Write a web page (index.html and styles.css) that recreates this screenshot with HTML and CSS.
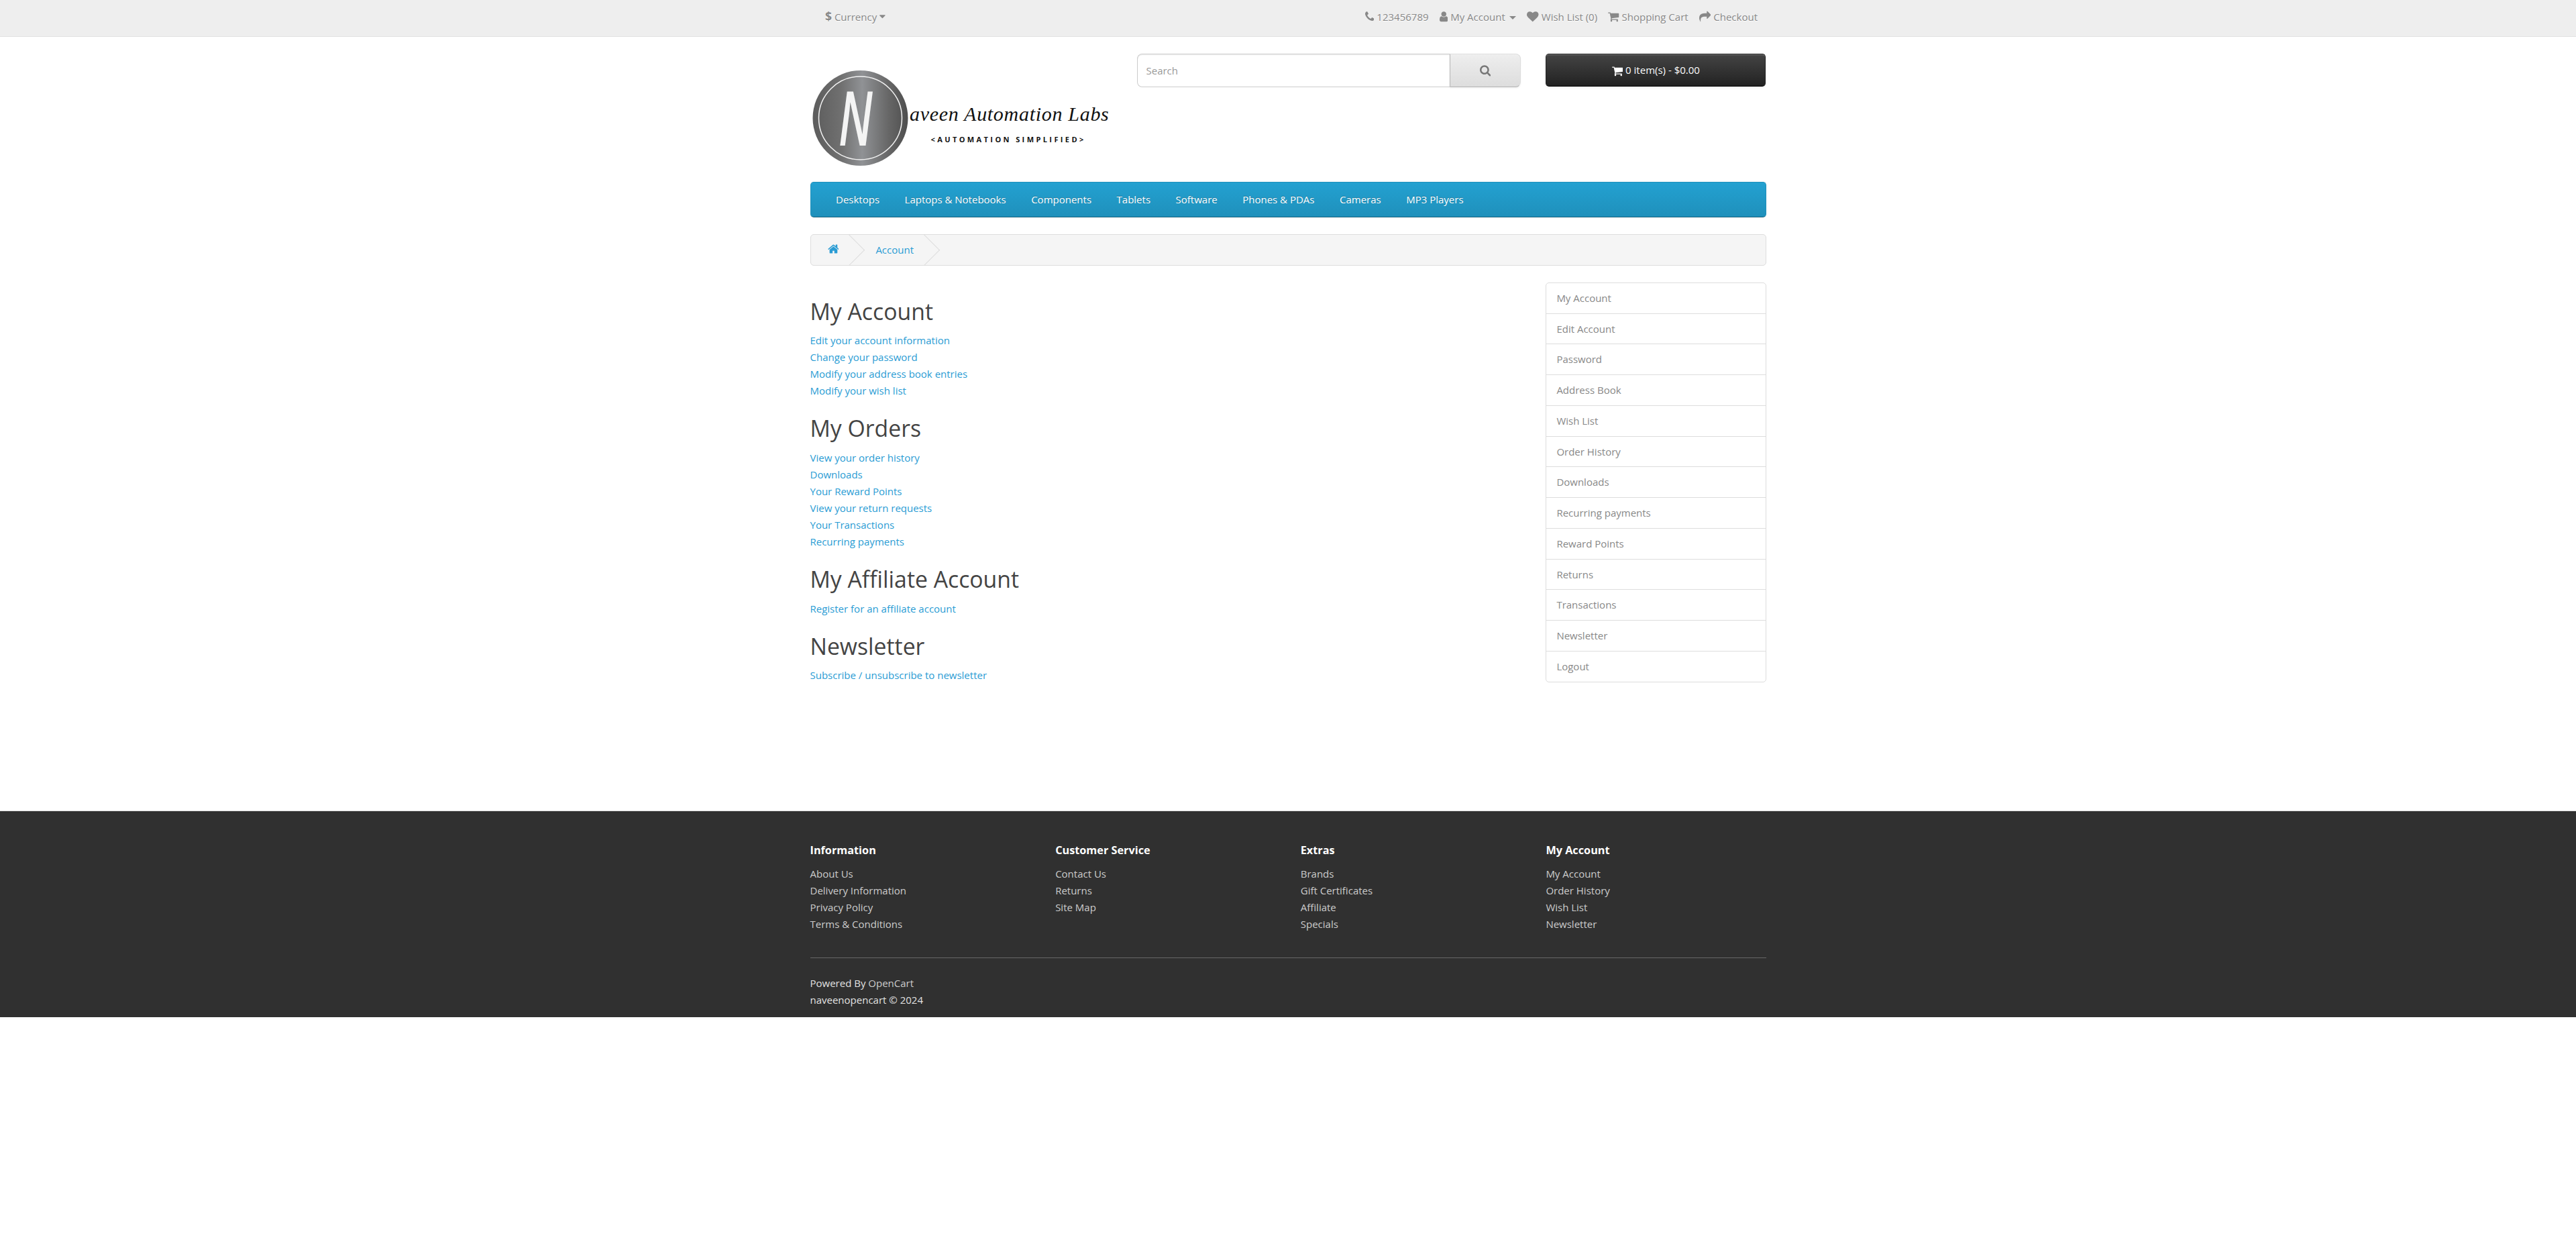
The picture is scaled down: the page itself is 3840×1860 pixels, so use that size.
FILE: index.html
```html
<!DOCTYPE html>
<html lang="en">
<head>
<meta charset="utf-8">
<title>Account</title>
<link rel="stylesheet" href="styles.css">
</head>
<body>
<nav class="top">
  <div class="container top-inner">
    <a class="currency" href="#"><strong>$</strong> <span>Currency</span> <svg class="fa caret-fa" viewBox="0 0 1024 1792"><path d="M1024 704q0 26-19 45l-448 448q-19 19-45 19t-45-19l-448-448q-19-19-19-45t19-45 45-19h896q26 0 45 19t19 45z"/></svg></a>
    <ul class="top-links">
      <li><a href="#"><svg class="fa w-phone" viewBox="192 0 1408 1792"><path d="M1600 1240q0 27-10 70.5t-21 68.5q-21 50-122 106-94 51-186 51-27 0-53-3.5t-57.5-12.5-47-14.5-55.5-20.5-49-18q-98-35-175-83-127-79-264-216t-216-264q-48-77-83-175-3-9-18-49t-20.5-55.5-14.5-47-12.5-57.5-3.5-53q0-92 51-186 56-101 106-122 25-11 68.5-21t70.5-10q14 0 21 3 18 6 53 76 11 19 30 54t35 63.5 31 53.5q3 4 17.5 25t21.5 35.5 7 28.5q0 20-28.5 50t-62 55-62 53-28.5 46q0 9 5 22.5t8.5 20.5 14 24 11.5 19q76 137 174 235t235 174q2 1 19 11.5t24 14 20.5 8.5 22.5 5q18 0 46-28.5t53-62 55-62 50-28.5q14 0 28.5 7t35.5 21.5 25 17.5q25 15 53.5 31t63.5 35 54 30q70 35 76 53 3 7 3 21z"/></svg></a> <span>123456789</span></li>
      <li><a href="#"><svg class="fa w-user" viewBox="256 0 1280 1792"><path d="M1536 1399q0 109-62.5 187t-150.5 78h-854q-88 0-150.5-78t-62.5-187q0-85 8.5-160.5t31.5-152 58.5-131 94-89 134.5-34.5q131 128 313 128t313-128q76 0 134.5 34.5t94 89 58.5 131 31.5 152 8.5 160.5zm-256-887q0 159-112.5 271.5t-271.5 112.5-271.5-112.5-112.5-271.5 112.5-271.5 271.5-112.5 271.5 112.5 112.5 271.5z"/></svg> <span>My Account</span> <i class="caret"></i></a></li>
      <li><a href="#"><svg class="fa w-heart" viewBox="0 0 1792 1792"><path d="M896 1664q-26 0-44-18l-624-602q-10-8-27.5-26t-55.5-65.5-68-97.5-53.5-121-23.5-138q0-220 127-344t351-124q62 0 126.5 21.5t120 58 95.5 68.5 76 68q36-36 76-68t95.5-68.5 120-58 126.5-21.5q224 0 351 124t127 344q0 221-229 450l-623 600q-18 18-44 18z"/></svg> <span>Wish List (0)</span></a></li>
      <li><a href="#"><svg class="fa w-cart" viewBox="64 0 1664 1792"><path d="M704 1536q0 52-38 90t-90 38-90-38-38-90 38-90 90-38 90 38 38 90zm896 0q0 52-38 90t-90 38-90-38-38-90 38-90 90-38 90 38 38 90zm128-1088v512q0 24-16.5 42.5t-40.5 21.5l-1044 122q13 60 13 70 0 16-24 64h920q26 0 45 19t19 45-19 45-45 19h-1024q-26 0-45-19t-19-45q0-11 8-31.5t16-36 21.5-40 15.5-29.5l-177-823h-204q-26 0-45-19t-19-45 19-45 45-19h256q16 0 28.5 6.5t19.5 15.5 13 24.5 8 26 5.5 29.5 4.5 26h1201q26 0 45 19t19 45z"/></svg> <span>Shopping Cart</span></a></li>
      <li><a href="#"><svg class="fa w-share" viewBox="0 0 1792 1792"><path d="M1792 640q0 26-19 45l-512 512q-19 19-45 19t-45-19-19-45v-256h-224q-98 0-175.500 6t-154 21.500-133 42.500-105.500 69.500-80 101-48.500 138.500-17.500 181q0 55 5 123 0 6 2.500 23.500t2.500 26.500q0 15-8.500 25t-23.500 10q-16 0-28-17-7-9-13-22t-13.500-30-10.500-24q-127-285-127-451 0-199 53-333 162-403 875-403h224v-256q0-26 19-45t45-19 45 19l512 512q19 19 19 45z"/></svg> <span>Checkout</span></a></li>
    </ul>
  </div>
</nav>

<header class="container header-row">
  <div class="col-logo">
    <a href="#" class="logo">
      <svg viewBox="0 0 450 178.750" role="img" aria-label="Naveen Automation Labs">
        <defs>
          <linearGradient id="metal" x1="0" y1="0" x2="1" y2="0">
            <stop offset="0" stop-color="#5c5c5c"/>
            <stop offset=".3" stop-color="#707070"/>
            <stop offset=".52" stop-color="#909295"/>
            <stop offset=".8" stop-color="#666"/>
            <stop offset="1" stop-color="#4e4e4e"/>
          </linearGradient>
        </defs>
        <circle cx="74.500" cy="96" r="71" fill="url(#metal)"/>
        <circle cx="74.500" cy="96" r="62" fill="none" stroke="#f2f2f2" stroke-width="1.500"/>
        <text class="logo-n" transform="translate(42 137) scale(.62 1)">N</text>
        <text class="logo-script" x="148" y="100">aveen Automation Labs</text>
        <text class="logo-tag" x="179.500" y="132">&lt;AUTOMATION SIMPLIFIED&gt;</text>
      </svg>
    </a>
  </div>
  <div class="col-search">
    <div class="search">
      <input class="search-input" type="text" placeholder="Search">
      <button class="search-btn" type="button"><svg class="fa w-search" viewBox="64 0 1664 1792"><path d="M1216 832q0-185-131.500-316.500t-316.500-131.500-316.500 131.500-131.500 316.500 131.500 316.500 316.500 131.500 316.500-131.500 131.500-316.500zm512 832q0 52-38 90t-90 38q-54 0-90-38l-343-342q-179 124-399 124-143 0-273.500-55.500t-225-150-150-225-55.500-273.500 55.500-273.500 150-225 225-150 273.500-55.500 273.500 55.500 225 150 150 225 55.500 273.500q0 220-124 399l343 343q37 37 37 90z"/></svg></button>
    </div>
  </div>
  <div class="col-cart">
    <button class="cart-btn" type="button"><svg class="fa cart-ico" viewBox="64 0 1664 1792"><path d="M704 1536q0 52-38 90t-90 38-90-38-38-90 38-90 90-38 90 38 38 90zm896 0q0 52-38 90t-90 38-90-38-38-90 38-90 90-38 90 38 38 90zm128-1088v512q0 24-16.5 42.5t-40.5 21.5l-1044 122q13 60 13 70 0 16-24 64h920q26 0 45 19t19 45-19 45-45 19h-1024q-26 0-45-19t-19-45q0-11 8-31.5t16-36 21.5-40 15.5-29.5l-177-823h-204q-26 0-45-19t-19-45 19-45 45-19h256q16 0 28.5 6.5t19.5 15.5 13 24.5 8 26 5.5 29.5 4.5 26h1201q26 0 45 19t19 45z"/></svg> <span>0 item(s) - $0.00</span></button>
  </div>
</header>

<div class="container">
  <nav class="menu">
    <ul class="menu-list">
      <li><a href="#">Desktops</a></li>
      <li><a href="#">Laptops &amp; Notebooks</a></li>
      <li><a href="#">Components</a></li>
      <li><a href="#">Tablets</a></li>
      <li><a href="#">Software</a></li>
      <li><a href="#">Phones &amp; PDAs</a></li>
      <li><a href="#">Cameras</a></li>
      <li><a href="#">MP3 Players</a></li>
    </ul>
  </nav>
</div>

<div class="container">
  <ul class="breadcrumb">
    <li><a href="#"><svg class="fa w-home" viewBox="64 0 1664 1792"><path d="M1472 992v480q0 26-19 45t-45 19h-384v-384h-256v384h-384q-26 0-45-19t-19-45v-480q0-1 .5-3t.5-3l575-474 575 474q1 2 1 6zm223-69l-62 74q-8 9-21 11h-3q-13 0-21-7l-692-577-692 577q-12 8-24 7-13-2-21-11l-62-74q-8-10-7-23.500t11-21.500l719-599q32-26 76-26t76 26l244 204v-195q0-14 9-23t23-9h192q14 0 23 9t9 23v408l219 182q10 8 11 21.500t-7 23.500z"/></svg></a></li>
    <li><a href="#">Account</a></li>
  </ul>
  <div class="main-row">
    <main class="content">
      <h2>My Account</h2>
      <ul class="links">
        <li><a href="#">Edit your account information</a></li>
        <li><a href="#">Change your password</a></li>
        <li><a href="#">Modify your address book entries</a></li>
        <li><a href="#">Modify your wish list</a></li>
      </ul>
      <h2>My Orders</h2>
      <ul class="links">
        <li><a href="#">View your order history</a></li>
        <li><a href="#">Downloads</a></li>
        <li><a href="#">Your Reward Points</a></li>
        <li><a href="#">View your return requests</a></li>
        <li><a href="#">Your Transactions</a></li>
        <li><a href="#">Recurring payments</a></li>
      </ul>
      <h2>My Affiliate Account</h2>
      <ul class="links">
        <li><a href="#">Register for an affiliate account</a></li>
      </ul>
      <h2>Newsletter</h2>
      <ul class="links">
        <li><a href="#">Subscribe / unsubscribe to newsletter</a></li>
      </ul>
    </main>
    <aside class="sidebar">
      <div class="list-group">
        <a href="#">My Account</a>
        <a href="#">Edit Account</a>
        <a href="#">Password</a>
        <a href="#">Address Book</a>
        <a href="#">Wish List</a>
        <a href="#">Order History</a>
        <a href="#">Downloads</a>
        <a href="#">Recurring payments</a>
        <a href="#">Reward Points</a>
        <a href="#">Returns</a>
        <a href="#">Transactions</a>
        <a href="#">Newsletter</a>
        <a href="#">Logout</a>
      </div>
    </aside>
  </div>
</div>

<footer class="footer">
  <div class="container">
    <div class="footer-cols">
      <div class="footer-col">
        <h5>Information</h5>
        <ul class="links">
          <li><a href="#">About Us</a></li>
          <li><a href="#">Delivery Information</a></li>
          <li><a href="#">Privacy Policy</a></li>
          <li><a href="#">Terms &amp; Conditions</a></li>
        </ul>
      </div>
      <div class="footer-col">
        <h5>Customer Service</h5>
        <ul class="links">
          <li><a href="#">Contact Us</a></li>
          <li><a href="#">Returns</a></li>
          <li><a href="#">Site Map</a></li>
        </ul>
      </div>
      <div class="footer-col">
        <h5>Extras</h5>
        <ul class="links">
          <li><a href="#">Brands</a></li>
          <li><a href="#">Gift Certificates</a></li>
          <li><a href="#">Affiliate</a></li>
          <li><a href="#">Specials</a></li>
        </ul>
      </div>
      <div class="footer-col">
        <h5>My Account</h5>
        <ul class="links">
          <li><a href="#">My Account</a></li>
          <li><a href="#">Order History</a></li>
          <li><a href="#">Wish List</a></li>
          <li><a href="#">Newsletter</a></li>
        </ul>
      </div>
    </div>
    <hr class="footer-rule">
    <p class="powered">Powered By <a href="#">OpenCart</a><br>naveenopencart &copy; 2024</p>
  </div>
</footer>
</body>
</html>
```

FILE: styles.css
```css
* { box-sizing: border-box; }
html { zoom: 1.25; }
body {
  margin: 0;
  font-family: "Open Sans", sans-serif;
  font-weight: 400;
  font-size: 12px;
  line-height: 20px;
  color: #666;
  background: #fff;
}
a { color: #2a9cd4; text-decoration: none; }
ul { list-style: none; margin: 0; padding: 0; }
.container { width: 1170px; margin: 0 auto; padding: 0 15px; }
.fa { display: inline-block; height: 14px; fill: currentColor; vertical-align: -2px; }
.w-phone { width: 11px; }
.w-user { width: 10px; }
.w-heart { width: 14px; }
.w-cart { width: 13px; }
.w-share { width: 14px; }
.w-search { width: 13px; }

/* top bar */
.top {
  background: #eee;
  border-bottom: 1px solid #e2e2e2;
  height: 44px;
  margin-bottom: 20px;
}
.top-inner { display: flex; justify-content: space-between; align-items: flex-start; }
.currency {
  color: #888;
  text-shadow: 0 1px 0 #fff;
  padding: 10px 0 0 18px;
  white-space: nowrap;
}
.currency strong { font-size: 14px; line-height: 14px; font-weight: 700; }
.caret-fa { width: 7px; height: 12px; vertical-align: -1px; }
.top-links { display: flex; padding: 10px 10px 0 0; gap: 3px; }
.top-links li { padding: 0 5px 0 0; margin-left: 5px; color: #888; text-shadow: 0 1px 0 #fff; white-space: nowrap; }
.top-links li:last-child { padding-right: 0; }
.top-links a { color: #888; }
.caret {
  display: inline-block;
  width: 0;
  height: 0;
  margin-left: 2px;
  vertical-align: middle;
  border-top: 4px solid;
  border-right: 4px solid transparent;
  border-left: 4px solid transparent;
}

/* header */
.header-row { display: flex; padding: 0; }
.col-logo { width: 33.3333%; padding: 0 15px; }
.col-search { width: 41.6667%; padding: 0 15px; }
.col-cart { width: 25%; padding: 0 15px; }
.logo { display: block; margin-bottom: 10px; }
.logo svg { display: block; width: 360px; height: 143px; }
.logo-n { font-family: "Open Sans", sans-serif; font-style: italic; font-size: 112px; font-weight: 600; fill: #f4f4f4; }
.logo-script { font-family: "Liberation Serif", serif; font-style: italic; font-size: 30px; letter-spacing: .7px; fill: #111; }
.logo-tag { font-family: "Open Sans", sans-serif; font-size: 11px; font-weight: 700; letter-spacing: 3.400px; fill: #111; }
.search { display: flex; height: 40px; }
.search-input {
  flex: 1;
  min-width: 0;
  height: 40px;
  padding: 0 10px;
  font: 12px/20px "Open Sans", sans-serif;
  color: #555;
  background: #fff;
  border: 1px solid #ccc;
  border-right: 0;
  border-radius: 6px 0 0 6px;
  box-shadow: inset 0 1px 1px rgba(0,0,0,.075);
}
.search-input::placeholder { color: #999; opacity: 1; }
.search-btn {
  width: 85px;
  height: 40px;
  padding: 0;
  color: #777;
  font-size: 15px;
  text-shadow: 0 1px 0 #fff;
  background: linear-gradient(to bottom, #eee, #ddd);
  border: 1px solid;
  border-color: #ddd #ddd #b3b3b3 #b7b7b7;
  border-radius: 0 6px 6px 0;
  box-shadow: inset 0 1px 0 rgba(255,255,255,.2), 0 1px 2px rgba(0,0,0,.05);
}
.cart-btn {
  display: block;
  width: 100%;
  height: 39.500px;
  padding: 0 16px;
  color: #fff;
  font: 12px/18px "Open Sans", sans-serif;
  text-shadow: 0 -1px 0 rgba(0,0,0,.25);
  background: linear-gradient(to bottom, #444, #222);
  border: 1px solid;
  border-color: #222 #222 #000;
  border-radius: 4px;
  box-shadow: inset 0 1px 0 rgba(255,255,255,.2), 0 1px 2px rgba(0,0,0,.05);
}
.cart-ico { width: 13px; height: 14px; vertical-align: -3px; }

/* menu */
.menu {
  min-height: 42px;
  padding: 0 15px;
  background: linear-gradient(to bottom, #23a1d1, #1f90bb);
  border: 1px solid;
  border-color: #1f90bb #1f90bb #145e7a;
  border-radius: 4px;
  margin-bottom: 20px;
}
.menu-list { display: flex; }
.menu-list a {
  display: block;
  padding: 10px 15px;
  color: #fff;
  text-shadow: 0 -1px 0 rgba(0,0,0,.25);
}

/* breadcrumb */
.breadcrumb {
  display: flex;
  gap: 4px;
  padding: 8px 0;
  margin-bottom: 20px;
  background: #f5f5f5;
  border: 1px solid #ddd;
  border-radius: 4px;
  overflow: hidden;
}
.breadcrumb li { position: relative; padding: 0 20px; white-space: nowrap; }
.breadcrumb li::after {
  content: "";
  position: absolute;
  top: -3px;
  right: -5px;
  width: 26px;
  height: 26px;
  border-right: 1px solid #ddd;
  border-bottom: 1px solid #ddd;
  transform: rotate(-45deg);
}
.w-home { width: 13.500px; height: 14.500px; vertical-align: -2px; }

/* content */
.main-row { display: flex; margin: 0 -15px; }
.content { width: 75%; min-height: 600px; padding: 0 15px; }
.sidebar { width: 25%; padding: 0 15px; }
h2 {
  font-size: 27px;
  font-weight: 500;
  line-height: 1.1;
  color: #444;
  margin: 20px 0 10px;
}
.links { margin-bottom: 10px; }
.list-group { display: flex; flex-direction: column; margin-bottom: 20px; }
.list-group a {
  display: block;
  padding: 8px 12px;
  margin-bottom: -1px;
  color: #888;
  background: #fff;
  border: 1px solid #ddd;
}
.list-group a:first-child { border-radius: 4px 4px 0 0; }
.list-group a:last-child { border-radius: 0 0 4px 4px; margin-bottom: 0; }

/* footer */
.footer {
  margin-top: 30px;
  padding: 30px 0 10px;
  background: #303030;
  border-top: 1px solid #ddd;
  color: #e2e2e2;
}
.footer a { color: #ccc; }
.footer-cols { display: flex; margin: 0 -15px; }
.footer-col { width: 25%; padding: 0 15px; }
h5 {
  font-family: "Open Sans", sans-serif;
  font-size: 13px;
  font-weight: 700;
  line-height: 1.1;
  color: #fff;
  margin: 10px 0;
}
.footer-rule {
  border: 0;
  border-bottom: 1px solid #666;
  margin: 20px 0;
  height: 0;
}
.powered { margin: 0; }
```
